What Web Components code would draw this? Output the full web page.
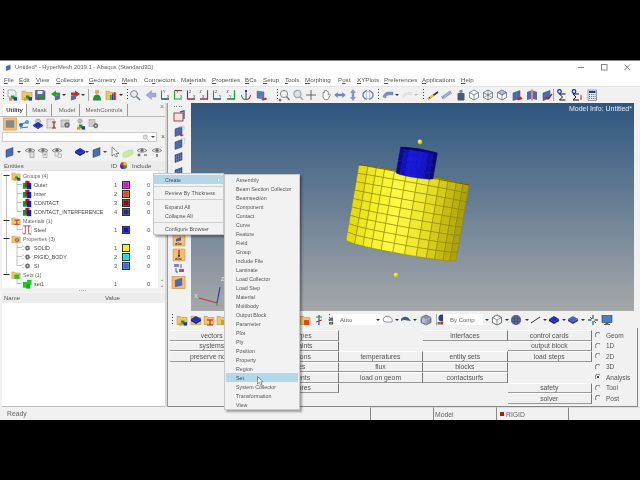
<!DOCTYPE html>
<html><head><meta charset="utf-8"><title>HyperMesh</title>
<style>
html,body{margin:0;padding:0;background:#000;width:640px;height:480px;overflow:hidden}
body{display:flex;flex-direction:column;justify-content:center;font-family:"Liberation Sans",sans-serif}
</style></head><body>
<hm-app>
  <hm-titlebar text="Untitled* - HyperMesh 2019.1 - Abaqus (Standard3D)"></hm-titlebar>
  <hm-menubar></hm-menubar>
  <hm-toolbar style="height:17px;border-top:1px solid #e4e4e4;padding-bottom:1px;box-sizing:border-box" items="dots@3 newdoc@12 open@27 save@40 arrg@56 drop@64 arrr@75 drop@83 sep@88 person@97 chart@111 drop@121 dots@127 mag@135 larrow@151 ax1@165 ax2@178 ax3@191 ax4@204 ax5@217 ax6@231 anchor@246 sheetr@262 dots@277 magp@284 mag2@298 cross@311 hand@326 lr@340 ud@353 rot@368 dots@378 curve@388 drop@397 curvef@407 dropf@416 dots@423 yline@433 spring@447 weight@461 cube1@474 cube2@488 cube3@502 sheetr2@517 sheetm@532 sheetc@547 sep@553 sig1@562 sig2@577 calc@592"></hm-toolbar>
  <hm-main>
    <hm-left-panel slot="left">
      <hm-tree-row level="0" icon="grpf" label="Groups (4)" first></hm-tree-row>
      <hm-tree-row level="1" icon="grp" label="Outer" num="1" color="#e010d0" inc="0"></hm-tree-row>
      <hm-tree-row level="1" icon="grp" label="Inner" num="2" color="#e84818" inc="0"></hm-tree-row>
      <hm-tree-row level="1" icon="grp" label="CONTACT" num="3" color="#801020" inc="0"></hm-tree-row>
      <hm-tree-row level="1" icon="grp" label="CONTACT_INTERFERENCE" num="4" color="#183878" inc="0" end></hm-tree-row>
      <hm-tree-row level="0" icon="matf" label="Materials (1)"></hm-tree-row>
      <hm-tree-row level="1" icon="matl" label="Steel" num="1" color="#1010d0" inc="0" end></hm-tree-row>
      <hm-tree-row level="0" icon="prof" label="Properties (3)"></hm-tree-row>
      <hm-tree-row level="1" icon="gear" label="SOLID" num="1" color="#f5f010" inc="0"></hm-tree-row>
      <hm-tree-row level="1" icon="gear" label="RIGID_BODY" num="2" color="#10e0e0" inc="0"></hm-tree-row>
      <hm-tree-row level="1" icon="gear" label="SI" num="3" color="#3070e0" inc="0" end></hm-tree-row>
      <hm-tree-row level="0" icon="setf" label="Sets (1)" last></hm-tree-row>
      <hm-tree-row level="1" icon="setg" label="set1" num="1" inc="0" end lastsec></hm-tree-row>
    </hm-left-panel>
    <hm-strip slot="strip"></hm-strip>
    <hm-viewport slot="view"></hm-viewport>
    <hm-toolbar slot="bar" style="height:17px" offset="168" items="dots@172 fgrn@182 fblu@196 fmat@209 fyel@222 forg@305 tool@319 dots@329 auto@333 combo1@358 lasso@388 drop@397 shape@406 drop@415 cube4@426 sep@436 bycomp@442 combo2@463 drop@487 wire@497 drop@507 mesh@516 drop@527 line@536 drop@545 dia@554 drop@564 diab@573 drop@583 cr2@593 mon@607"></hm-toolbar>
    <hm-buttons slot="panel">
      <hm-btn r="1" c="1">vectors</hm-btn><hm-btn r="2" c="1">systems</hm-btn><hm-btn r="3" c="1">preserve node</hm-btn>
      <hm-btn r="1" c="2">load types</hm-btn><hm-btn r="2" c="2">constraints</hm-btn><hm-btn r="3" c="2">equations</hm-btn><hm-btn r="4" c="2">forces</hm-btn><hm-btn r="5" c="2">moments</hm-btn><hm-btn r="6" c="2">pressures</hm-btn>
      <hm-btn r="3" c="3">temperatures</hm-btn><hm-btn r="4" c="3">flux</hm-btn><hm-btn r="5" c="3">load on geom</hm-btn>
      <hm-btn r="1" c="4">interfaces</hm-btn><hm-btn r="3" c="4">entity sets</hm-btn><hm-btn r="4" c="4">blocks</hm-btn><hm-btn r="5" c="4">contactsurfs</hm-btn>
      <hm-btn r="1" c="5">control cards</hm-btn><hm-btn r="2" c="5">output block</hm-btn><hm-btn r="3" c="5">load steps</hm-btn><hm-btn r="6" c="5">safety</hm-btn><hm-btn r="7" c="5">solver</hm-btn>
      <hm-radio r="1">Geom</hm-radio><hm-radio r="2">1D</hm-radio><hm-radio r="3">2D</hm-radio><hm-radio r="4">3D</hm-radio><hm-radio r="5" checked>Analysis</hm-radio><hm-radio r="6">Tool</hm-radio><hm-radio r="7">Post</hm-radio>
    </hm-buttons>
  </hm-main>
  <hm-statusbar></hm-statusbar>
  <hm-context-menu slot="overlay" style="left:153px;top:113px;width:71px;height:62px">
    <hm-menu-item hl arrow>Create</hm-menu-item><hm-menu-sep></hm-menu-sep>
    <hm-menu-item>Review By Thickness</hm-menu-item><hm-menu-sep></hm-menu-sep>
    <hm-menu-item>Expand All</hm-menu-item><hm-menu-item>Collapse All</hm-menu-item><hm-menu-sep></hm-menu-sep>
    <hm-menu-item>Configure Browser</hm-menu-item>
  </hm-context-menu>
  <hm-context-menu slot="overlay" wide style="left:224px;top:114px;width:76px;height:236px;padding:0">
    <hm-menu-item>Assembly</hm-menu-item><hm-menu-item>Beam Section Collector</hm-menu-item><hm-menu-item>Beamsection</hm-menu-item><hm-menu-item>Component</hm-menu-item><hm-menu-item>Contact</hm-menu-item><hm-menu-item>Curve</hm-menu-item><hm-menu-item>Feature</hm-menu-item><hm-menu-item>Field</hm-menu-item><hm-menu-item>Group</hm-menu-item><hm-menu-item>Include File</hm-menu-item><hm-menu-item>Laminate</hm-menu-item><hm-menu-item>Load Collector</hm-menu-item><hm-menu-item>Load Step</hm-menu-item><hm-menu-item>Material</hm-menu-item><hm-menu-item>Multibody</hm-menu-item><hm-menu-item>Output Block</hm-menu-item><hm-menu-item>Parameter</hm-menu-item><hm-menu-item>Plot</hm-menu-item><hm-menu-item>Ply</hm-menu-item><hm-menu-item>Position</hm-menu-item><hm-menu-item>Property</hm-menu-item><hm-menu-item>Region</hm-menu-item><hm-menu-item hl>Set</hm-menu-item><hm-menu-item>System Collector</hm-menu-item><hm-menu-item>Transformation</hm-menu-item><hm-menu-item>View</hm-menu-item>
  </hm-context-menu>
  <hm-cursor slot="overlay" style="left:257px;top:316px"></hm-cursor>
</hm-app>
<script>
const F='<path d="M1 4V2.3h3.5l1 1.2H11V10.5H1z" fill="#f0c468" stroke="#b08838" stroke-width=".5"/>';
const SH=(c='#4a6cb0')=>`<path d="M2 4 9 1.5V9L2 11.5z" fill="${c}" stroke="#2a3c70" stroke-width=".5"/>`;
const CUBES='<rect x="5" y="6.5" width="3.4" height="3.4" fill="#1a9a1a"/><rect x="7.6" y="8.2" width="3.4" height="3.4" fill="#1a3ac0"/><rect x="3" y="8.6" width="3.4" height="3" fill="#d0a010"/>';
const EYE='<path d="M1 4.5Q6 .5 11 4.5Q6 8 1 4.5z" fill="#e4e4e4" stroke="#666" stroke-width=".7"/><circle cx="6" cy="4.3" r="1.5" fill="#667"/>';
const DIA='<path d="M6 2 11 5 6 8 1 5z" fill="#1c2fc0"/><path d="M1 5v2l5 3 5-3V5L6 8z" fill="#10208a"/>';
const GEAR='<circle cx="6" cy="6" r="3.2" fill="#777" stroke="#333" stroke-width=".8" stroke-dasharray="1 .8"/><circle cx="6" cy="6" r="1.1" fill="#eee"/>';
const HEX=(x='')=>`<path d="M6 1 10.5 3.5V8.5L6 11 1.5 8.5V3.5zM1.5 3.5 6 6 10.5 3.5M6 6V11" fill="${x||'#fff'}" stroke="#3a4a5a" stroke-width=".6"/>`;
const AX=(a,b,d,l1,l2)=>`<path d="${d}" fill="none" stroke="${a}" stroke-width="1.1"/><path d="${d==='M2.5 1.5V10H10'?'M2.5 10H10':'M9.5 1.5V10H2'}" fill="none" stroke="${b}" stroke-width="1.1"/><text x="${d==='M2.5 1.5V10H10'?4:1.5}" y="4" font-size="3.6" fill="#333" font-family="Liberation Sans">${l1}</text><text x="${d==='M2.5 1.5V10H10'?8:4}" y="8.5" font-size="3.6" fill="#333" font-family="Liberation Sans">${l2}</text>`;
const ABC='<rect width="12" height="12" rx=".5" fill="#f4bd78" stroke="#c48a40" stroke-width=".5"/><text x="2.3" y="10.8" font-size="3.8" font-weight="bold" fill="#333" font-family="Liberation Sans">abc</text>';
const ICONS={
newdoc:'<path d="M2 1h6l2 2v5H2z" fill="#f4f4f4" stroke="#6a8a9a" stroke-width=".6"/>'+CUBES,
open:F+CUBES,
save:'<path d="M1.5 1.5H10L11 2.5V10.5H1.5z" fill="#5a6aa8" stroke="#2a3a70" stroke-width=".5"/><rect x="3.5" y="2" width="5" height="3" fill="#eee"/>'+'<rect x="6" y="7" width="3" height="3" fill="#1a9a1a"/><rect x="3" y="8" width="3" height="3" fill="#c04010"/>',
arrg:'<path d="M1 5 6 1.5V3.5H10V6.5H6V8.5z" fill="#2ea02e"/>'+'<path d="M5 7 10 5.5V10L5 11.5z" fill="#506ca8"/>',
arrr:'<path d="M11 5 6 1.5V3.5H2V6.5H6V8.5z" fill="#d02828"/>'+'<path d="M2 7 7 5.5V10L2 11.5z" fill="#506ca8"/>',
person:'<circle cx="6" cy="3" r="2.2" fill="#e8a860"/><path d="M2 11.5Q2 5.5 6 5.5T10 11.5z" fill="#2a8a3a"/>',
chart:F+'<rect x="5" y="6" width="1.6" height="5" fill="#20a040"/><rect x="7" y="4.5" width="1.6" height="6.5" fill="#2040d0"/><rect x="9" y="3.5" width="1.6" height="7.5" fill="#d02020"/>',
mag:'<circle cx="5" cy="5" r="3.4" fill="#e8eaf0" stroke="#808890" stroke-width="1"/><path d="M7.5 7.5 11 11" stroke="#707880" stroke-width="1.4"/>',
magp:'<circle cx="6" cy="5" r="3.6" fill="#f0f2f6" stroke="#808890" stroke-width="1"/><path d="M8.5 7.5 11.5 11" stroke="#707880" stroke-width="1.4"/><path d="M.5 11h3M2 9.5v3" stroke="#222" stroke-width=".7"/>',
mag2:'<circle cx="5.5" cy="5" r="3.6" fill="#dde0e4" stroke="#a0a8b0" stroke-width="1.2"/><path d="M8 7.5 11 11" stroke="#a0a8b0" stroke-width="1.4"/>',
larrow:'<path d="M1 6 6.5 1.5V4H11V8H6.5V10.5z" fill="#a8a8e0" stroke="#8888c0" stroke-width=".4"/>',
ax1:AX('#18a030','#303890','M2.5 1.5V10H10','Y','X'),
ax2:AX('#18a030','#d02828','M2.5 1.5V10H10','Y','X').replace('M2.5 10H10','M2.5 1.5H10'),
ax3:AX('#4030a0','#d02828','M2.5 1.5V10H10','Z','X'),
ax4:AX('#2040b0','#d02828','M9.5 1.5V10H2','Z','X'),
ax5:AX('#18a030','#3038a0','M2.5 1.5V10H10','Z','Y'),
ax6:AX('#2040b0','#18a030','M9.5 1.5V10H2','Z','Y'),
anchor:'<path d="M6 1V10" stroke="#2040b0" stroke-width="1"/><path d="M1.5 6Q2 10.5 6 10.5" fill="none" stroke="#18a030" stroke-width="1.1"/><path d="M10.5 6Q10 10.5 6 10.5" fill="none" stroke="#d02828" stroke-width="1.1"/><circle cx="6" cy="2" r="1" fill="#222"/>',
sheetr:'<path d="M1 2 8 3V10L1 9z" fill="#5a7cb8" stroke="#3a5080" stroke-width=".4"/><path d="M5 10.5 10 8.5 11 10.5 7 11.5z" fill="#d82020"/>',
sheetr2:SH()+'<path d="M5 9.5 10 7.5 11.5 10 7 11.5z" fill="#d82020"/>',
sheetm:'<path d="M1 3 5 1.5V10L1 11z" fill="#506ca8"/><path d="M7 1.5 11 3V11L7 10z" fill="#506ca8"/><path d="M6 .5V11.5" stroke="#d02020" stroke-width="1"/>',
sheetc:SH()+'<path d="M5 8 7 10 11 5" fill="none" stroke="#c81818" stroke-width="1.5"/>',
cross:'<path d="M6 1V11M1 6H11" stroke="#444" stroke-width=".8"/>',
hand:'<path d="M3 6V3.5Q4 3 4.3 4V1.8Q5.3 1.2 5.6 2V1.5Q6.6 1 7 2V2.5Q8 2 8.3 3V6L9.5 5Q10.5 5.5 10 6.5L8 10.5H4.5L3 8z" fill="#fafafa" stroke="#666" stroke-width=".7"/>',
lr:'<path d="M.5 6 3.5 3.5V5H8.5V3.5L11.5 6 8.5 8.5V7H3.5V8.5z" fill="#7a88c8" stroke="#5060a0" stroke-width=".3"/>',
ud:'<path d="M6 .5 8.5 3.5H7V8.5H8.5L6 11.5 3.5 8.5H5V3.5H3.5z" fill="#8a98d0" stroke="#5060a0" stroke-width=".3"/>',
rot:'<path d="M5 1.5Q1 3 1 6T5 10.5M7 1.5Q11 3 11 6T7 10.5" fill="none" stroke="#7a88b8" stroke-width="1.5"/><ellipse cx="6" cy="6" rx="1.8" ry="4" fill="none" stroke="#b0b8d0" stroke-width=".7"/>',
curve:'<path d="M1 8Q2 3 7 3H11V6H7Q4 6 3.5 9z" fill="#7a90b8" stroke="#506088" stroke-width=".3"/>',
curvef:'<path d="M1 8Q2 3 7 3H11V6H7Q4 6 3.5 9z" fill="#dde2ea"/>',
yline:'<path d="M1 10 11 3" stroke="#333" stroke-width="1.6"/><path d="M3 8.6 6.5 6.2" stroke="#e8d820" stroke-width="1.8"/><circle cx="1.7" cy="9.6" r="1" fill="#e8d820"/>',
spring:'<path d="M1 9 10 3" stroke="#8088b8" stroke-width="3.4" stroke-dasharray="1 .4"/>',
weight:'<rect x="2.5" y="4" width="7" height="7.5" rx="1" fill="#485878"/><circle cx="6" cy="2.5" r="1.8" fill="#808ca8"/>',
cube1:HEX(),cube2:HEX('#f8f8f8')+'<path d="M1.5 8.5 6 6 10.5 8.5M6 1V6" fill="none" stroke="#3a4a5a" stroke-width=".5"/>',
cube3:'<path d="M6 1 10.5 3.5 6 6 1.5 3.5z" fill="#b4b8e8" stroke="#3a4a5a" stroke-width=".6"/><path d="M1.5 3.5V8.5L6 11 10.5 8.5V3.5L6 6zM6 6V11" fill="#fff" stroke="#3a4a5a" stroke-width=".6"/>',
cube4:'<path d="M6 1 11 3.5V8.5L6 11 1 8.5V3.5z" fill="#8f8fae" stroke="#444" stroke-width=".6"/><path d="M1 3.5 6 6 11 3.5M6 6V11" stroke="#ddd" fill="none" stroke-width=".5"/><rect x="2" y="4.7" width="3" height="4" fill="#b8b8d8"/>',
sig1:'<circle cx="3.5" cy="2.5" r="1.8" fill="none" stroke="#1830a8" stroke-width="1.2"/><path d="M9.5 5H3.5L6.5 8 3.5 11H9.5" fill="none" stroke="#111" stroke-width="1"/>',
sig2:'<circle cx="3" cy="2.5" r="1.8" fill="none" stroke="#1830a8" stroke-width="1.2"/><path d="M8 5H2L5 8 2 11H8" fill="none" stroke="#111" stroke-width="1"/><path d="M10 6V11" stroke="#c02020" stroke-width="1"/>',
calc:'<rect x="2" y="1" width="8.5" height="10.5" fill="#e8ecf4" stroke="#5a6a88" stroke-width=".6"/><rect x="3" y="2" width="6.5" height="2" fill="#203a90"/><path d="M3 5.5h6.5M3 7.5h6.5M3 9.5h6.5" stroke="#667" stroke-width="1" stroke-dasharray="1 .9"/>',
sel:'<rect x=".5" y=".5" width="14" height="13" fill="#f4bd78" stroke="#d09040" stroke-width=".6"/><rect x="3" y="3" width="9" height="8" fill="#888"/>',
link:'<circle cx="3" cy="7" r="2" fill="#2a70c0"/><circle cx="9" cy="4" r="2" fill="#50a0e0"/><path d="M4 6 8 4.500M2 10 10 9" stroke="#3060a0" stroke-width=".9"/>',
compd:'<circle cx="6" cy="3.5" r="2.5" fill="#c8c8c8" stroke="#777" stroke-width=".5"/>'+DIA.replace('M6 2 11 5 6 8 1 5z','M6 4 11 7 6 10 1 7z').replace('M1 5v2l5 3 5-3V5L6 8z','M1 7v1l5 3 5-3V7L6 10z'),
matb:'<rect x="1" y="1" width="7" height="9" fill="#e4e4e4" stroke="#888" stroke-width=".5"/><path d="M6 4H10M8 4V10M6 10H10" stroke="#b02020" stroke-width="1.1" fill="none"/>',
gears:'<rect x="1" y="2" width="8" height="7" fill="#d0d0d0" stroke="#777" stroke-width=".5"/><g transform="translate(2.5 2.5) scale(.75)">'+GEAR+'</g>',
cub:'<circle cx="6" cy="3" r="2.2" fill="#c0c0c0" stroke="#777" stroke-width=".4"/>'+CUBES,
grayg:'<rect x="1" y="1.5" width="6" height="7" fill="#ccc" stroke="#888" stroke-width=".4"/><g transform="translate(3.5 3.5) scale(.7)">'+GEAR+'</g>',
sh:SH(),
dropf:'',
eyes1:EYE+'<rect x="6" y="6" width="4" height="5.5" fill="#ddd" stroke="#777" stroke-width=".5"/>',
eyes2:EYE+'<rect x="6" y="6" width="4" height="5.5" fill="#eee" stroke="#888" stroke-width=".5"/><rect x="7" y="7.500" width="2" height="2" fill="#aaa"/>',
eyes3:EYE+'<rect x="4" y="6" width="3.500" height="4" fill="#eee" stroke="#888" stroke-width=".5"/><rect x="7" y="8" width="3.500" height="3.500" fill="#eee" stroke="#888" stroke-width=".5"/>',
dia:DIA,
diab:'<path d="M6 2 11 5 6 8 1 5z" fill="#5060b8"/><path d="M1 5 6 8 11 5V7L6 10 1 7z" fill="#283890"/>',
cursor:'<path d="M3 1V10L5.300 8 7 11 8.500 10.300 7 7.500H10z" fill="#fff" stroke="#444" stroke-width=".6"/>',
green:'<path d="M1 7 7 4H11V8L5 11H1z" fill="#cfe8a0" stroke="#b0c880" stroke-width=".5"/>',
eyepm:EYE+'<path d="M1.500 9h3M3 7.500v3M8 9h3" stroke="#222" stroke-width=".8"/>',
eyed:EYE+'<path d="M6 8v3" stroke="#222" stroke-width="1"/>',
grpf:F+CUBES,matf:F+'<path d="M4 5H10M7 5V10M4 10H10" stroke="#b02020" stroke-width="1" fill="none"/>',prof:F+'<g transform="translate(3 3) scale(.7)">'+GEAR+'</g>',setf:F+'<rect x="4" y="5.500" width="6" height="5" fill="#28c028"/>',
grp:'<rect x="1" y="3.500" width="6" height="7" fill="#10a030"/><rect x="4" y="1" width="5" height="7" fill="#c01818"/><rect x="6" y="3.500" width="5" height="7.500" fill="#1818c0"/>',
matl:'<path d="M1.500 1H10.500M1.500 10.500H4M8 10.500H10.500M4 1V10.500M8 1V10.500" stroke="#a02030" stroke-width=".9" fill="none"/><rect x="1" y="1" width="10" height="10" fill="none" stroke="#aaa" stroke-width=".4"/>',
gear:'<g transform="translate(1.500 1) scale(.85)">'+GEAR+'</g><path d="M0 4h2M0 8h2" stroke="#555" stroke-width=".7" stroke-dasharray=".7 .5"/>',
setg:'<rect x="1" y="3.500" width="5" height="7" fill="#10d020"/><rect x="6" y="1" width="5.500" height="6" fill="#10d020"/><rect x="5" y="6" width="5" height="5.500" fill="#0cb01c"/>',
fgrn:F+CUBES,fblu:F+DIA,fmat:F+'<path d="M4 6H10M7 6V11M4 11H10" stroke="#b02020" stroke-width="1" fill="none"/>',fyel:F+'<rect x="5" y="6" width="5" height="5" fill="#c8a020"/>',forg:F+'<rect x="5" y="6" width="5" height="5" fill="#e04818"/>',
tool:'<path d="M6 1V11" stroke="#1830a8" stroke-width="1"/><path d="M3 3H9" stroke="#18a030" stroke-width="1"/><path d="M3 8 9 6" stroke="#c02020" stroke-width="1"/>',
auto:'<path d="M1 6Q5 1 11 5L7 8z" fill="#5a6a88"/><rect x="2" y="8" width="2.500" height="2.500" fill="#20a030"/><rect x="4.500" y="8" width="2.500" height="2.500" fill="#d02020"/><rect x="7" y="8" width="2.500" height="2.500" fill="#2030d0"/>',
bycomp:'<circle cx="6" cy="4" r="3.600" fill="#303a90"/><rect x="1.500" y="8" width="3" height="2.500" fill="#20a030"/><rect x="4.500" y="8" width="3" height="2.500" fill="#d02020"/><rect x="7.500" y="8" width="3" height="2.500" fill="#e0c020"/>',
lasso:'<path d="M1 5Q3 1 7 2.500T10 8L4 8Q1 8 1 5z" fill="#fff" stroke="#667" stroke-width=".7"/>',
shape:'<path d="M1 5Q4 1.500 8 3.500L11 7 7 6.500Q4 5.500 1 7z" fill="#485a80"/>',
wire:HEX()+'<circle cx="6" cy="6" r="4.800" fill="none" stroke="#505868" stroke-width=".6" stroke-dasharray="1 .6"/>',
mesh:'<circle cx="6" cy="6" r="5" fill="#3a4670"/><path d="M1 6H11M6 1V11M2 3H10M2 9H10M3 1.500V10.500M9 1.500V10.500" stroke="#a0a8c0" stroke-width=".4"/>',
line:'<path d="M1 9 10 3" stroke="#333" stroke-width="1"/>',
cr2:'<path d="M6 1V5M6 7V11M1 6H4.500M7.500 6H11" stroke="#3a6a5a" stroke-width="1.300"/><path d="M3 3 5 5M9 9 7 7" stroke="#666" stroke-width="1"/>',
mon:'<rect x="1" y="1.500" width="10" height="7" fill="#4a80c0" stroke="#334" stroke-width=".6"/><rect x="4.500" y="8.500" width="3" height="1.500" fill="#556"/><rect x="3" y="10" width="6" height="1" fill="#667"/>',
abc1:ABC+'<path d="M3 5 8 3V6.500L3 7.500z" fill="#4a5c98"/>',
abc2:ABC+'<path d="M6 1V7" stroke="#c01818" stroke-width="1.200"/><circle cx="6" cy="7" r=".900" fill="#222"/>',
abc3:'<rect x="1" y="2" width="5" height="3" fill="#7a88c8"/><rect x="6" y="7" width="5" height="3" fill="#b05070"/><path d="M3 6V10H5M8 2V6" stroke="#2030a0" stroke-width=".8" fill="none"/>',
abc4:'<rect width="14" height="13" fill="#f4bd78" stroke="#c48a40" stroke-width=".6"/><path d="M3.500 4 10.500 2V9.500L3.500 11z" fill="#4a6cb0" stroke="#2a3c70" stroke-width=".4"/>',
strip1:'<rect x="1" y="2" width="9" height="8" fill="#f0e4e0" stroke="#8a2020" stroke-width=".8"/><path d="M7 1 11 0V8" fill="none" stroke="#4a5c98" stroke-width="1.400"/>',
strip2:SH()+'<path d="M5 8 11 10 8 11.500z" fill="#d02020"/><path d="M7 2 11 1V5" stroke="#ccc" fill="none"/>',
strip3:SH()+'<path d="M7 1 11.500 0V6" stroke="#ccc" stroke-width=".8" fill="none"/>',
strip4:SH('#3a4c90')+'<path d="M3.500 3.500V11M5.500 3V10.500M7.500 2.500V10M2 6.500 9 4.500M2 9 9 7" stroke="#9aa4d0" stroke-width=".4"/>'
};
class Base extends HTMLElement{ root(html){ const s=this.shadowRoot||this.attachShadow({mode:'open'}); s.innerHTML=html; return s; } }

class HmIcon extends Base{ connectedCallback(){ const n=this.getAttribute('name'),z=this.getAttribute('size')||12;
 this.root(`<style>:host{display:block;width:${z}px;height:${z}px;flex:none}svg{display:block;overflow:visible}</style><svg width="${z}" height="${z}" viewBox="0 0 ${n==='sel'||n==='abc4'?'15 14':'12 12'}">${ICONS[n]||''}</svg>`);} }
customElements.define('hm-icon',HmIcon);

class HmToolbar extends Base{ connectedCallback(){ const off=+(this.getAttribute('offset')||0);
 let cur=off,out='';
 (this.getAttribute('items')||'').split(/\s+/).forEach(it=>{ const [n,cs]=it.split('@'); const c=+cs;
  let w=12,inner='';
  if(n==='dots'){w=2;inner='<i class="dots"></i>';}
  else if(n==='sep'){w=1;inner='<i class="sep"></i>';}
  else if(n==='drop'||n==='dropf'){w=4;inner=`<i class="drop ${n==='dropf'?'f':''}"></i>`;}
  else if(n==='combo1'){w=50;inner='<div class="combo" style="width:50px"><span>Auto</span><i class="drop"></i></div>';}
  else if(n==='combo2'){w=40;inner='<div class="combo" style="width:40px"><span>By Comp</span></div>';}
  else inner=`<hm-icon name="${n}"></hm-icon>`;
  const m=c-w/2-cur; cur=c+w/2;
  out+=`<div class="it" style="margin-left:${m}px;width:${w}px">${inner}</div>`;});
 this.root(`<style>:host{display:flex;align-items:center;background:#f1f1f1;font-family:"Liberation Sans",sans-serif;overflow:hidden}
 .it{display:flex;align-items:center;justify-content:center;flex:none}
 .dots{display:block;width:1px;height:12px;background:repeating-linear-gradient(#444 0 1px,transparent 1px 3px)}
 .sep{display:block;width:1px;height:12px;background:#aaa}
 .drop{display:block;width:0;height:0;border:2px solid transparent;border-top:2.5px solid #333;border-bottom:0}
 .drop.f{border-top-color:#bbb}
 .combo{background:#fff;height:11px;display:flex;align-items:center;justify-content:space-between;box-sizing:border-box;padding:0 3px 0 7px;font-size:6px;color:#666}
 </style>${out}`);} }
customElements.define('hm-toolbar',HmToolbar);

class HmApp extends Base{ connectedCallback(){ this.root(`<style>:host{display:flex;flex-direction:column;position:relative;width:640px;height:360px;box-sizing:border-box;background:#f1f1f1;font-family:"Liberation Sans",sans-serif;filter:blur(.4px);overflow:hidden}
 ::slotted(hm-main){flex:1;min-height:0}</style><slot></slot><slot name="overlay"></slot>`);} }
customElements.define('hm-app',HmApp);

class HmTitlebar extends Base{ connectedCallback(){ this.root(`<style>:host{display:flex;align-items:center;height:13px;background:#fff;border-top:1px solid #8a8a8a;box-sizing:border-box;padding-left:5px;font-size:5.87px;color:#666;flex:none}
 hm-icon{margin-right:3px}.sp{flex:1}
 .w{display:flex;align-items:center;justify-content:center;width:23px;color:#777}
 svg{display:block}</style>
 <hm-icon name="sh" size="7"></hm-icon><span>${this.getAttribute('text')}</span><span class="sp"></span>
 <div class="w"><svg width="7" height="7"><path d="M0 3.500H6" stroke="#888"/></svg></div>
 <div class="w"><svg width="7" height="7"><rect x=".5" y=".5" width="5.500" height="5.500" fill="none" stroke="#888"/></svg></div>
 <div class="w" style="margin-right:1px"><svg width="7" height="7"><path d="M.5 .5 6 6M6 .5 .5 6" stroke="#888"/></svg></div>`);} }
customElements.define('hm-titlebar',HmTitlebar);

class HmMenubar extends Base{ connectedCallback(){ const it=[['F','ile',15],['E','dit',17],['V','iew',20],['C','ollectors',33],['G','eometry',33],['M','esh',22],['Co','n|nectors',37],['Ma','t|erials',31],['P','roperties',33],['B','Cs',18],['S','etup',22],['T','ools',20],['M','orphing',33],['P','o|st',19],['X','YPlots',27],['P','references',38],['A','pplications',39],['H','elp',20]];
 const h=it.map(([a,b,w])=>{ let t; if(b.includes('|')){const [p,q]=b.split('|'); const ch=p.slice(-1)||a.slice(-1); t=a+(p.slice(0,-1))+`<u>${ch}</u>`+q; } else t=`<u>${a}</u>${b}`; return `<span style="width:${w}px">${t}</span>`;}).join('');
 this.root(`<style>:host{display:flex;align-items:center;height:13px;background:#fff;padding-left:4px;font-size:6.2px;color:#555;flex:none}span{flex:none;white-space:nowrap}u{text-underline-offset:1px;text-decoration-thickness:.5px}</style>${h}`);} }
customElements.define('hm-menubar',HmMenubar);

class HmMain extends Base{ connectedCallback(){ this.root(`<style>:host{display:flex;min-height:0}
 .l{width:167px;flex:none;display:flex}
 .r{flex:1;display:flex;flex-direction:column;min-width:0;border-left:1px solid #999}
 .top{height:208px;display:flex;flex:none}
 .edge{width:6px;flex:none;background:#f1f1f1}
 ::slotted(hm-left-panel){flex:1}
 ::slotted(hm-viewport){flex:1}
 ::slotted(hm-buttons){flex:1}
 </style><div class="l"><slot name="left"></slot></div>
 <div class="r"><div class="top"><slot name="strip"></slot><slot name="view"></slot><div class="edge"></div></div>
 <slot name="bar"></slot><slot name="panel"></slot></div>`);} }
customElements.define('hm-main',HmMain);

const row=(items,start)=>{let cur=start,o='';items.forEach(([n,c,w=12,z=12])=>{o+=`<div style="margin-left:${c-w/2-cur}px;width:${w}px;flex:none;display:flex;justify-content:center">${n==='drop'?'<i class="drop"></i>':`<hm-icon name="${n}" size="${z}"></hm-icon>`}</div>`;cur=c+w/2;});return o;};
class HmLeftPanel extends Base{ connectedCallback(){
 const tab=(t,l,w,a)=>`<div class="tab ${a?'a':''}" style="margin-left:${l}px;width:${w}px">${t}</div>`;
 this.root(`<style>:host{display:flex;flex-direction:column;background:#f1f1f1;border-right:2px solid #d8d8d8;box-sizing:border-box;min-width:0;color:#555}
 .tabs{height:14px;display:flex;align-items:flex-end;flex:none;position:relative;border-bottom:1px solid #bbb;box-sizing:border-box;font-size:6px}
 .tab{height:12px;line-height:12px;text-align:center;border-right:1px solid #999;box-sizing:border-box;flex:none;color:#666}
 .tab.a{font-weight:bold;color:#444;background:#fff}
 .x{position:absolute;right:1px;top:0;font-size:7px;line-height:7px;color:#777}
 .ir{display:flex;align-items:center;flex:none}
 .search{height:10px;margin:1px 8px 0 2px;background:#fff;border:1px solid #ccc;display:flex;align-items:center;justify-content:flex-end;flex:none;box-sizing:border-box;position:relative;gap:2px;padding-right:1px}
 .sx{position:absolute;right:-9px;top:0;font-size:7px;line-height:8px;color:#555}
 .drop{display:block;width:0;height:0;border:2px solid transparent;border-top:2.5px solid #444;border-bottom:0;align-self:center}
 .hd{display:flex;align-items:center;background:#ececec;flex:none;font-size:6px;color:#555;box-sizing:border-box;margin-left:2px}
 .tree{height:117px;flex:none;margin-left:2px;background:#fff;display:flex;min-height:0}
 .rows{flex:1;min-width:0;display:flex;flex-direction:column}
 .sb{width:7px;background:#f1f1f1;display:flex;flex-direction:column;justify-content:flex-end;align-items:center;font-size:5px;color:#444}
 .grip{height:5px;flex:none;display:flex;justify-content:center;align-items:center;gap:1px}
 .grip i{width:1px;height:1px;background:#aaa}
 .blank{flex:1;background:#fff;margin-left:2px;border-bottom:1px solid #bbb}
 </style>
 <div class="tabs">${tab('Utility',3,24,1)}${tab('Mask',1,24)}${tab('Model',3,25)}${tab('MeshControls',1,47)}<span class="x">×</span></div>
 <div class="ir" style="height:14px">${row([['sel',10,15,14],['link',24],['compd',38],['matb',52],['gears',66],['cub',80],['grayg',94]],0)}</div>
 <div class="search"><hm-icon name="mag2" size="7"></hm-icon><i class="drop"></i><span class="sx">×</span></div>
 <div class="ir" style="height:19px">${row([['sh',10],['drop',19,4],['eyes1',30],['eyes2',43],['eyes3',57],['dia',80],['drop',87,4],['sh',97],['drop',105,4],['cursor',115],['green',128],['eyepm',142],['eyed',157]],0)}</div>
 <div class="hd" style="height:10px;padding-left:2px;border:1px solid #e0e0e0;border-width:0 0 1px"><span style="flex:1">Entities</span><span style="width:10px;text-align:center">ID</span><svg width="9" height="9" style="margin-right:4px"><circle cx="4.500" cy="4.500" r="3.500" fill="#e03030"/><path d="M4.500 4.500V1A3.500 3.500 0 0 1 8 4.500z" fill="#e8d020"/><path d="M4.500 4.500H8A3.500 3.500 0 0 1 4.500 8z" fill="#20a040"/><path d="M4.500 4.500V8A3.500 3.500 0 0 1 1 4.500z" fill="#2040c0"/></svg><span style="width:24px">Include</span><span style="width:9px"></span></div>
 <div class="tree"><div class="rows"><slot></slot></div><div class="sb"><span>⌄</span><span>⌄</span></div></div>
 <div class="grip"><i></i><i></i><i></i><i></i></div>
 <div class="hd" style="height:10px;padding-left:2px"><span style="width:101px">Name</span><span>Value</span></div>
 <div class="blank"></div>`);} }
customElements.define('hm-left-panel',HmLeftPanel);

class HmTreeRow extends Base{ connectedCallback(){ const g=k=>this.getAttribute(k),h=k=>this.hasAttribute(k),lv=+g('level');
 let lead;
 if(lv===0){ const y1=h('first')?4.5:0,y2=h('last')?4.5:9;
  lead=`<svg width="9" height="9" style="flex:none"><path d="M4.500 ${y1}V${y2}" stroke="#999" stroke-width=".6"/><path d="M1.500 4.500H7.500" stroke="#333" stroke-width="1"/></svg>`;
 } else { lead=`<svg width="20" height="9" style="flex:none">${h('lastsec')?'':'<path d="M4.500 0V9" stroke="#999" stroke-width=".6"/>'}<path d="M15 0V${h('end')?4.5:9}M15 4.500H20" stroke="#999" stroke-width=".6"/></svg>`; }
 const sw=g('color')?`<i class="sw" style="background:${g('color')}"></i>`:'<i class="sw n"></i>';
 const ic=`<hm-icon name="${g('icon')}" size="10"></hm-icon>`;
 const right=lv?`<span class="id">${g('num')}</span>${sw}<span class="inc">${g('inc')}</span>`:'';
 this.root(`<style>:host{display:flex;align-items:center;height:9px;font-size:5.3px;color:#555;white-space:nowrap;flex:none;box-sizing:border-box}
 .lb{flex:1;margin-left:2px;min-width:0;color:${lv?'#444':'#666'}}
 .id{width:8px;text-align:right;margin-right:5px;font-size:5.6px}
 .sw{display:block;width:6px;height:6px;border:.5px solid #333;box-shadow:inset 0 0 0 .5px rgba(255,255,255,.3);margin-right:0}
 .sw.n{visibility:hidden}
 .inc{width:20px;text-align:right;margin-right:8px;font-size:5.6px}
 </style>${lead}${ic}<span class="lb">${g('label')}</span>${right}`);} }
customElements.define('hm-tree-row',HmTreeRow);

class HmStrip extends Base{ connectedCallback(){ const icons=[['strip1',117,12],['strip2',131,12],['strip3',144,12],['strip4',157,12],['strip4',172,12],['strip4',186,12],['strip4',199,12],['strip4',213,12],['strip4',227,12],['abc1',240,12],['abc2',255,12],['abc3',268,12],['abc4',283,14]];
 let cur=107,o='';icons.forEach(([n,c,z])=>{o+=`<hm-icon name="${n}" size="${z}" style="margin-top:${c-z/2-cur}px"></hm-icon>`;cur=c+z/2;});
 this.root(`<style>:host{display:flex;flex-direction:column;align-items:center;width:23px;flex:none;box-sizing:border-box;padding:0 2px 0 1px;background:#f1f1f1}
 .d{height:1px;width:10px;margin-top:3px;background:repeating-linear-gradient(90deg,#888 0 1px,transparent 1px 2.500px);flex:none}</style><div class="d"></div>${o}`);} }
customElements.define('hm-strip',HmStrip);

function cyl(T,R,A,E0,E1,ss,rows,shade,stroke,sw){ let o='';
 const P=(th,v)=>{const e=E0+(E1-E0)*v,c=Math.cos(th),s=Math.sin(th);return [T[0]+R[0]*s+A[0]*v+(-.15*e)*c,T[1]+R[1]*s+A[1]*v+e*c];};
 const ths=ss.map(s=>Math.asin(Math.max(-1,Math.min(1,s))));
 for(let i=0;i<ths.length-1;i++){const a=ths[i],b=ths[i+1],col=shade((a+b)/2);
  for(let j=0;j<rows;j++){const v0=j/rows,v1=(j+1)/rows,q=[P(a,v0),P(b,v0),P(b,v1),P(a,v1)];
   o+=`<polygon points="${q.map(p=>p[0].toFixed(1)+','+p[1].toFixed(1)).join(' ')}" fill="${col}" stroke="${stroke}" stroke-width="${sw}"/>`;}}
 return o;}
const mix=(a,b,t)=>a.map((x,i)=>Math.round(x+(b[i]-x)*t));
const ramp=(stops)=>th=>{const u=(Math.sin(th)+1)/2;let k=0;while(k<stops.length-2&&u>stops[k+1][0])k++;const [u0,c0]=stops[k],[u1,c1]=stops[k+1];const m=mix(c0,c1,Math.min(1,Math.max(0,(u-u0)/(u1-u0))));return `rgb(${m})`;};
class HmViewport extends Base{ connectedCallback(){
 const y=ramp([[0,[226,216,20]],[.2,[246,240,40]],[.42,[255,250,70]],[.65,[238,228,40]],[.82,[205,192,20]],[1,[170,158,15]]]);
 const b=ramp([[0,[8,8,130]],[.3,[25,25,225]],[.65,[22,22,215]],[1,[6,6,110]]]);
 const ys=[118,145,170,195,225,260,295,330,360,385,410,430,448].map(x=>(x-118)/165-1);
 const bs=[-1,-.78,-.52,-.26,0,.26,.52,.78,1];
 const yellow=cyl([414-191,175-103],[55,10],[-13,75.5],-1.2,3.2,ys,9,y,'#8a8400',.5);
 const blue=cyl([419-191,150-103],[18.500,3],[-4.500,26],-.8,1.5,bs,4,b,'#1010a8',.35);
 this.root(`<style>:host{display:block;position:relative;background:linear-gradient(#2e567f,#a6a8aa);min-width:0;overflow:hidden;font-size:7px;color:#e8eef4}
 .info{position:absolute;right:2px;top:2px;font-family:"Liberation Sans",sans-serif;white-space:nowrap}
 svg{position:absolute;left:0;top:0}</style>
 <div class="info">Model Info: Untitled*</div>
 <svg width="444" height="208" viewBox="0 0 444 208"><defs><radialGradient id="d" cx=".4" cy=".35"><stop offset="0" stop-color="#fffc80"/><stop offset="1" stop-color="#c8c010"/></radialGradient></defs>
 <circle cx="${420-191}" cy="${142-103}" r="2.400" fill="url(#d)"/>
 <circle cx="${396-191}" cy="${275-103}" r="2.400" fill="url(#d)"/>
 <path d="M${359-191} ${165-103}Q${414-191} ${170-103} ${469-191} ${185-103}L${469-191} ${187-103}L${359-191} ${167-103}z" fill="#6a6400"/>
 ${yellow}
 <path d="M${359-191} ${164.500-103}L${469-191} ${185-103}" stroke="#5a5400" stroke-width=".8" fill="none"/>
 ${blue}
 <path d="M${401-191} ${147-103}Q${419-191} ${147-103} ${437-191} ${153-103}L${436.800-191} ${154-103}L${401-191} ${148.500-103}z" fill="#0a0a6a"/>
 <g font-family="Liberation Sans" font-size="5.500" fill="#e8e8ee">
  <path d="M${199-191} ${298-103}L${217-191} ${303-103}" stroke="#c83030" stroke-width="1"/>
  <path d="M${217-191} ${303-103}L${220-191} ${287-103}" stroke="#2838b8" stroke-width="1.200"/>
  <path d="M${217-191} ${303-103}V${306-103}" stroke="#20c040" stroke-width="1.400"/>
  <text x="${194-191}" y="${298-103}">X</text><text x="${221-191}" y="${281-103}">Z</text></g>
 </svg>`);} }
customElements.define('hm-viewport',HmViewport);

class HmButtons extends Base{ connectedCallback(){ this.root(`<style>:host{display:grid;box-sizing:border-box;background:#f1f1f1;padding:2px 0 0 2px;border-right:1px solid #888;border-bottom:1px solid #888;margin-right:2px;grid-template-columns:repeat(4,84.400px) 84.400px 1fr;grid-template-rows:repeat(7,10.500px);align-content:start}</style><slot></slot>`);} }
customElements.define('hm-buttons',HmButtons);
class HmBtn extends Base{ connectedCallback(){ this.style.gridArea=`${this.getAttribute('r')}/${this.getAttribute('c')}`; this.root(`<style>:host{display:flex;align-items:center;justify-content:center;box-sizing:border-box;font-size:6.800px;color:#555;border-top:1px solid #fff;border-bottom:1px solid #999;border-right:1px solid #777;background:#f0f0f0;white-space:nowrap;overflow:hidden;min-width:0}</style><slot></slot>`);} }
customElements.define('hm-btn',HmBtn);
class HmRadio extends Base{ connectedCallback(){ this.style.gridArea=`${this.getAttribute('r')}/6`; const c=this.hasAttribute('checked');
 this.root(`<style>:host{display:flex;align-items:center;font-size:6.500px;color:#555;padding-left:3px}svg{margin-right:5px;flex:none}</style><svg width="6" height="6"><path d="M5 1A2.500 2.500 0 1 0 1 5" fill="none" stroke="#555" stroke-width=".8"/>${c?'<circle cx="3" cy="3" r="1.100" fill="#222"/>':''}</svg><slot></slot>`);} }
customElements.define('hm-radio',HmRadio);

class HmStatusbar extends Base{ connectedCallback(){ this.root(`<style>:host{display:flex;height:13px;flex:none;background:#f1f1f1;font-size:6.800px;color:#666;align-items:stretch}
 div{box-sizing:border-box;display:flex;align-items:center;border-left:1px solid #888;padding-left:1px;border-top:1px solid #ddd}
 .f{border:0;width:370px;padding-left:7px;flex:none}
 i{display:block;width:4px;height:4px;background:#c01010;margin:0 2px 0 2px}</style>
 <div class="f">Ready</div><div style="width:63px"></div><div style="width:63px">Model</div><div style="width:72px"><i></i>RIGID</div><div style="flex:1"></div>`);} }
customElements.define('hm-statusbar',HmStatusbar);

class HmContextMenu extends Base{ connectedCallback(){ this.root(`<style>:host{display:flex;flex-direction:column;position:absolute;box-sizing:border-box;background:#f2f2f2;border:1px solid #c8c8c8;box-shadow:1.500px 1.500px 2px rgba(0,0,0,.35);padding:1px 0;z-index:3}</style><slot></slot>`);} }
customElements.define('hm-context-menu',HmContextMenu);
class HmMenuItem extends Base{ connectedCallback(){ const wide=this.parentElement.hasAttribute('wide');
 this.root(`<style>:host{display:flex;align-items:center;justify-content:space-between;height:9px;flex:none;font-size:5.300px;color:#555;white-space:nowrap;box-sizing:border-box;padding:0 3px 0 ${wide?10:11}px;margin:${wide?'0 1px':'0'};${this.hasAttribute('hl')?'background:#b6d6ea;color:#444':''}}
 i{display:block;width:0;height:0;border:2px solid transparent;border-left:2.500px solid #fff;border-right:0}</style><span><slot></slot></span>${this.hasAttribute('arrow')?'<i></i>':''}`);} }
customElements.define('hm-menu-item',HmMenuItem);
class HmMenuSep extends Base{ connectedCallback(){ this.root(`<style>:host{display:block;height:1px;background:#d0d0d0;margin:1.500px 0 2px;flex:none}</style>`);} }
customElements.define('hm-menu-sep',HmMenuSep);
class HmCursor extends Base{ connectedCallback(){ this.root(`<style>:host{display:block;position:absolute;width:7px;height:10px;z-index:4}svg{display:block}</style><svg width="7" height="10" viewBox="0 0 7 10"><path d="M.5 .5V8L2.300 6.300 3.600 9.300 5 8.700 3.800 5.800H6.200z" fill="#fff" stroke="#555" stroke-width=".6"/></svg>`);} }
customElements.define('hm-cursor',HmCursor);
</script>
</body></html>
